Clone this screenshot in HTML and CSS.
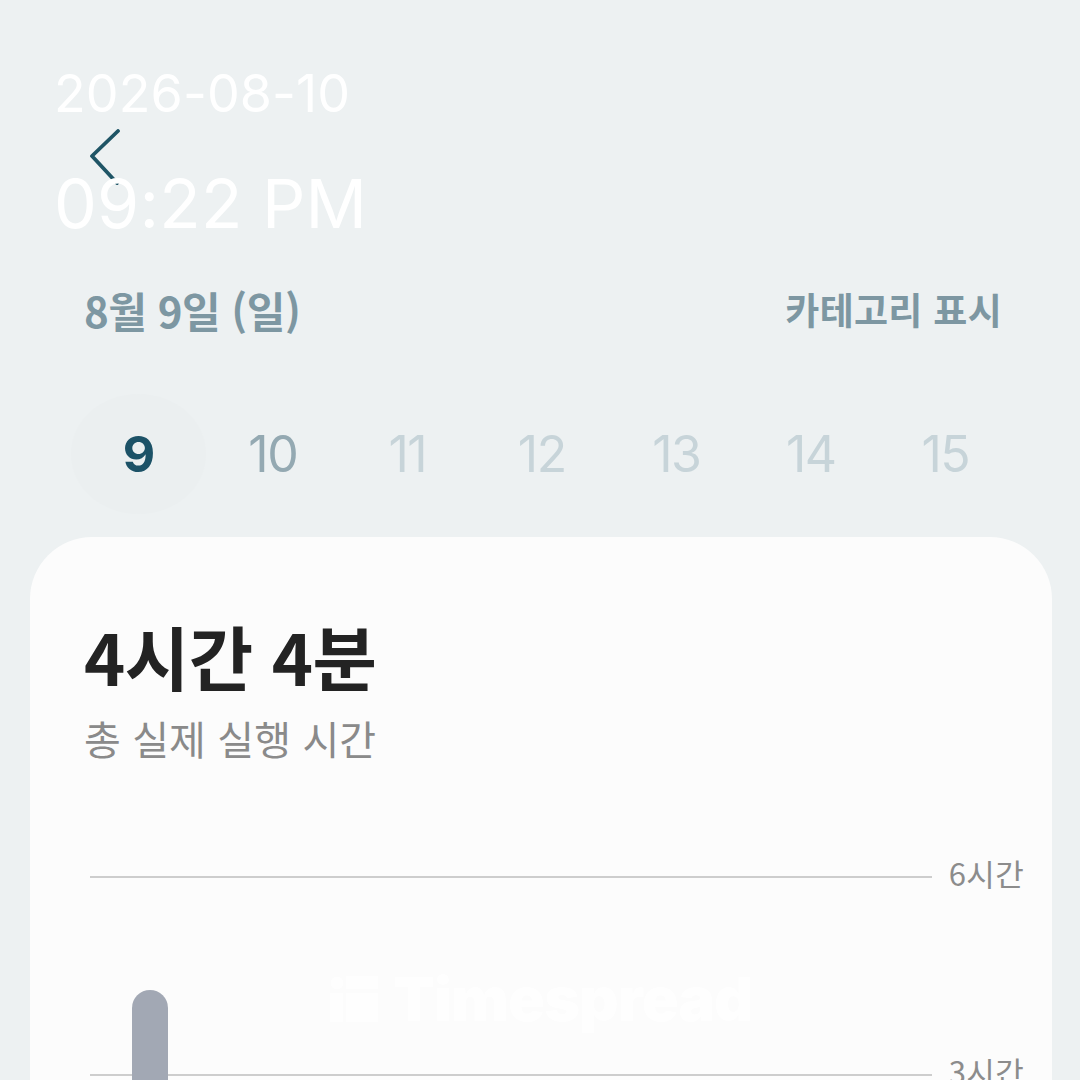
FILE: index.html
```html
<!DOCTYPE html>
<html lang="ko">
<head>
<meta charset="utf-8">
<title>Timespread</title>
<link rel="stylesheet" href="styles.css">
</head>
<body>
<main class="screen">
  <div class="nav">
    <svg class="back" width="34" height="56" viewBox="0 0 34 56"><path d="M29 2 3 27 28 54" fill="none" stroke="#1f5566" stroke-width="3.8" stroke-linecap="round" stroke-linejoin="round"/></svg>
  </div>
  <div class="heading">
    <span class="date">8월 9일 (일)</span>
    <span class="cat">카테고리 표시</span>
  </div>
  <div class="days">
    <div class="day active">9</div>
    <div class="day near">10</div>
    <div class="day">11</div>
    <div class="day">12</div>
    <div class="day">13</div>
    <div class="day">14</div>
    <div class="day">15</div>
  </div>
  <section class="card">
    <h1 class="total">4시간 4분</h1>
    <p class="sub">총 실제 실행 시간</p>
    <div class="chart">
      <div class="row"><div class="line"></div><span class="tick">6시간</span></div>
      <div class="row"><div class="line"></div><span class="tick">3시간</span></div>
      <div class="bar"></div>
    </div>
  </section>
  <div class="stamp">
    <div class="stamp-date">2026-08-10</div>
    <div class="stamp-time">09:22 PM</div>
  </div>
  <div class="mark">
    <svg width="48" height="46" viewBox="0 0 48 46"><circle cx="7" cy="7" r="6.5" fill="#fff"/><rect x="16" y="0" width="32" height="13" fill="#fff"/><rect x="0" y="17" width="13" height="29" fill="#fff"/><rect x="16" y="17" width="32" height="29" fill="#fff"/></svg>
    <span class="mark-text">Timespread</span>
  </div>
</main>
</body>
</html>
```
FILE: styles.css
```css
* { box-sizing: border-box; }
html, body { margin: 0; height: 100%; }
body { background: #edf1f2; overflow: hidden; font-family: Inter, "Noto Sans CJK KR", sans-serif; }
.screen { position: relative; width: 1080px; height: 1080px; overflow: hidden; padding-top: 129px; }
.nav { height: 56px; padding-left: 89px; }
.back { display: block; }
.heading { display: flex; justify-content: space-between; align-items: center; margin-top: 100px; padding: 0 78px 0 84px; height: 48px; color: #7d97a2; font-weight: 700; font-family: "Noto Sans CJK KR", sans-serif; }
.date { font-size: 42px; letter-spacing: -0.5px; }
.cat { font-size: 37px; letter-spacing: 0.3px; }
.days { display: flex; margin-top: 61px; padding-left: 71px; height: 120px; }
.day { width: 134.5px; display: flex; align-items: center; justify-content: center; font-size: 50px; font-weight: 400; color: #c7d4d9; letter-spacing: -1.5px; }
.day.near { color: #94a9b2; }
.day.active { background: #ebeff0; border-radius: 50%; color: #1c5267; font-weight: 700; }
.card { margin: 23px 0 0 30px; width: 1022px; height: 700px; background: #fcfcfc; border-radius: 62px 62px 0 0; padding: 74px 28px 0 54px; }
.total { margin: 0; font: 700 70px/90px "Noto Sans CJK KR", sans-serif; color: #232323; letter-spacing: -0.5px; }
.sub { margin: 12px 0 0; font: 400 40px/50px "Noto Sans CJK KR", sans-serif; color: #8a8a8a; letter-spacing: 0.1px; }
.chart { position: relative; margin-top: 94px; }
.row { display: flex; align-items: center; gap: 17px; height: 40px; margin-bottom: 158px; margin-left: 6px; }
.line { flex: 1; height: 2px; background: #cdcdcd; }
.tick { font: 400 31px/36px "Noto Sans CJK KR", sans-serif; color: #8c8c8c; letter-spacing: 0.3px; margin-bottom: 8px; }
.bar { position: absolute; left: 48px; top: 133px; width: 36px; height: 200px; background: #a2a8b4; border-radius: 18px 18px 0 0; }
.stamp { position: absolute; left: 54px; top: 63px; color: #fff; font-family: Inter, sans-serif; }
.stamp-date { font-size: 52px; line-height: 62px; letter-spacing: 0.1px; }
.stamp-time { font-size: 68px; line-height: 80px; margin-top: 38px; letter-spacing: 0.2px; }
.mark { position: absolute; left: 330px; top: 976px; display: flex; align-items: center; gap: 15px; opacity: 0.85; }
.mark-text { font: 900 61px/46px Inter, sans-serif; color: #fff; letter-spacing: -0.8px; }
```
